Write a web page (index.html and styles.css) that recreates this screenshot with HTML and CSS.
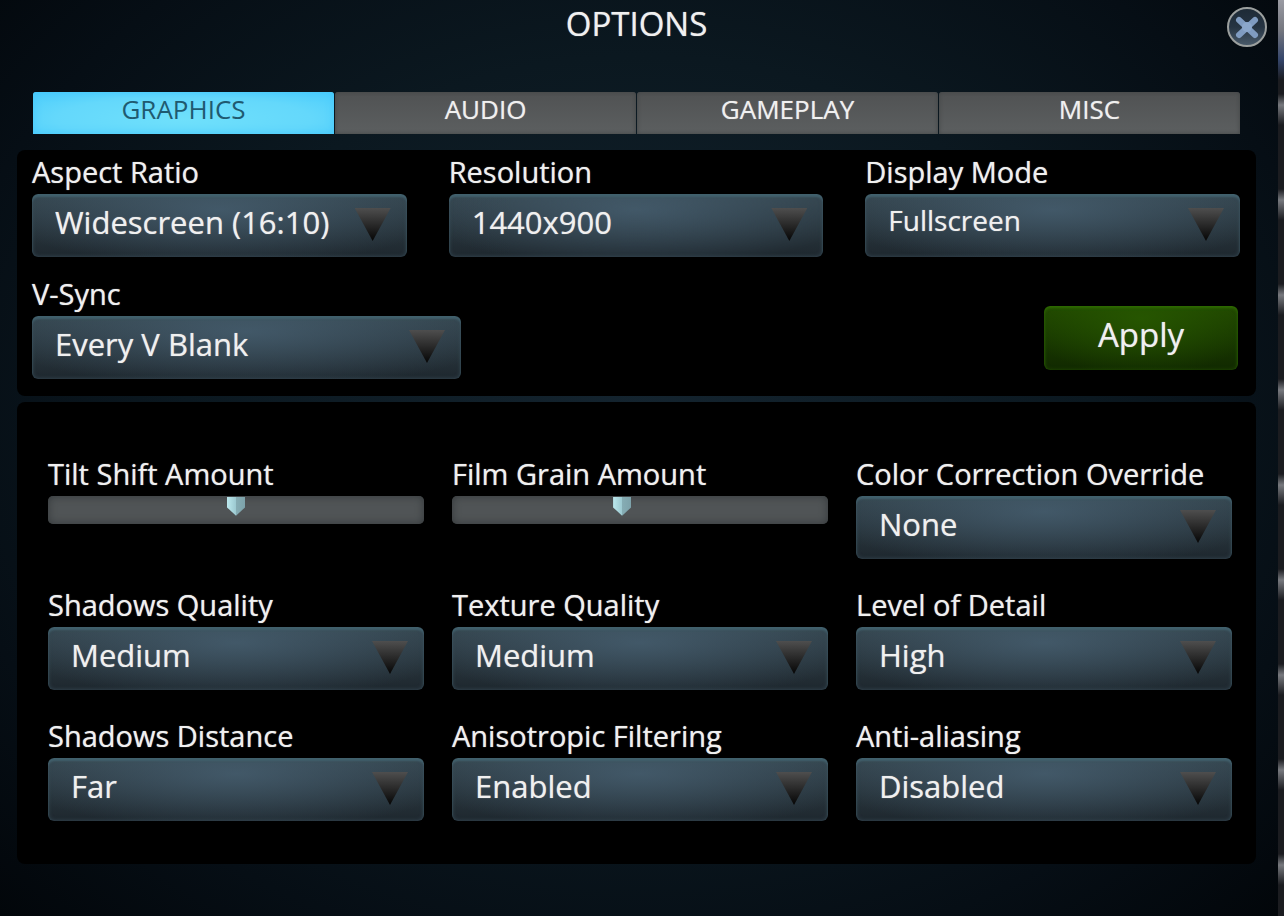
FILE: index.html
```html
<!DOCTYPE html>
<html lang="en">

<head>
	<meta charset="utf-8">
	<title>Options</title>
	<link rel="stylesheet" href="styles.css">
</head>

<body>
	<main class="window">
		<header class="title-bar">
			<h1>OPTIONS</h1>
			<button class="close" aria-label="Close">
				<svg viewBox="0 0 42 42" width="42" height="42">
					<defs>
						<linearGradient id="disc" x1="0" y1="0" x2="0" y2="1">
							<stop offset="0" stop-color="#1d2a36" />
							<stop offset="0.5" stop-color="#263442" />
							<stop offset="1" stop-color="#4a5b6b" />
						</linearGradient>
					</defs>
					<circle cx="21" cy="21" r="19" fill="url(#disc)" stroke="#9b9f9e" stroke-width="2" />
					<path d="M13 14 L29 29 M29 14 L13 29" stroke="#7f9bc0" stroke-width="6" stroke-linecap="round" />
					<circle cx="21" cy="21" r="5" fill="#8ba7cb" />
				</svg>
			</button>
		</header>

		<nav class="tabs">
			<button class="tab active">GRAPHICS</button>
			<button class="tab">AUDIO</button>
			<button class="tab">GAMEPLAY</button>
			<button class="tab">MISC</button>
		</nav>

		<section class="panel display">
			<div class="field">
				<label for="aspect">Aspect Ratio</label>
				<div class="dropdown">
					<select id="aspect"><option>Widescreen (16:10)</option></select>
				</div>
			</div>
			<div class="field">
				<label for="resolution">Resolution</label>
				<div class="dropdown">
					<select id="resolution"><option>1440x900</option></select>
				</div>
			</div>
			<div class="field">
				<label for="mode">Display Mode</label>
				<div class="dropdown">
					<select id="mode" class="small"><option>Fullscreen</option></select>
				</div>
			</div>
			<div class="bottom-row">
				<div class="field vsync">
					<label for="vsync">V-Sync</label>
					<div class="dropdown">
						<select id="vsync"><option>Every V Blank</option></select>
					</div>
				</div>
				<button class="apply">Apply</button>
			</div>
		</section>

		<section class="panel quality">
			<div class="field">
				<label for="tilt">Tilt Shift Amount</label>
				<input type="range" id="tilt" min="0" max="100" value="50">
			</div>
			<div class="field">
				<label for="grain">Film Grain Amount</label>
				<input type="range" id="grain" min="0" max="100" value="45">
			</div>
			<div class="field">
				<label for="color">Color Correction Override</label>
				<div class="dropdown">
					<select id="color"><option>None</option></select>
				</div>
			</div>
			<div class="field">
				<label for="shadows">Shadows Quality</label>
				<div class="dropdown">
					<select id="shadows"><option>Medium</option></select>
				</div>
			</div>
			<div class="field">
				<label for="texture">Texture Quality</label>
				<div class="dropdown">
					<select id="texture"><option>Medium</option></select>
				</div>
			</div>
			<div class="field">
				<label for="lod">Level of Detail</label>
				<div class="dropdown">
					<select id="lod"><option>High</option></select>
				</div>
			</div>
			<div class="field">
				<label for="distance">Shadows Distance</label>
				<div class="dropdown">
					<select id="distance"><option>Far</option></select>
				</div>
			</div>
			<div class="field">
				<label for="filtering">Anisotropic Filtering</label>
				<div class="dropdown">
					<select id="filtering"><option>Enabled</option></select>
				</div>
			</div>
			<div class="field">
				<label for="aa">Anti-aliasing</label>
				<div class="dropdown">
					<select id="aa"><option>Disabled</option></select>
				</div>
			</div>
		</section>
	</main>
</body>

</html>
```

FILE: styles.css
```css
* {
	box-sizing: border-box;
}

body {
	margin: 0;
	padding-right: 6px;
	min-height: 100vh;
	background: linear-gradient(#9a9ba3 0, #75777f 30px, #34456a 60px, transparent 80px), repeating-linear-gradient(#77797e 0, #1b1c20 20px, #1b1c20 84px, #77797e 95px) 0 10px;
	color: #f0f0f0;
	font-family: "Open Sans", sans-serif;
	text-shadow: 0 0 1px #b0b0b0;
}

button,
select {
	font-family: inherit;
	color: inherit;
	text-shadow: inherit;
	border: 0;
}

.window {
	min-height: 100vh;
	padding: 0 22px 0 17px;
	background: radial-gradient(ellipse at 50% 45%, #14242f 0%, #0b1820 50%, #060e15 78%, #02060a 100%);
}

.title-bar {
	position: relative;
	height: 92px;
}

h1 {
	margin: 0;
	font-size: 33px;
	line-height: 48px;
	font-weight: 400;
	text-align: center;
}

.close {
	position: absolute;
	top: 6px;
	right: -12px;
	padding: 0;
	background: none;
	cursor: pointer;
}

.close svg {
	display: block;
}

.tabs {
	display: flex;
	gap: 1px;
	margin: 0 16px 16px;
}

.tab {
	flex: 1;
	height: 42px;
	padding: 0 0 8px;
	font-size: 26px;
	line-height: 34px;
	border-radius: 3px 3px 0 0;
	background: linear-gradient(#505253, #5c5f60);
	box-shadow: inset 0 0 4px #414445;
	cursor: pointer;
}

.tab.active {
	color: #1f5a70;
	text-shadow: none;
	background: radial-gradient(ellipse at 50% 65%, #6fe0fb 0%, #64d8fb 60%, #4accfc 100%);
	box-shadow: inset 0 0 8px #46c8fd;
}

.panel {
	display: grid;
	grid-template-columns: repeat(3, 1fr);
	background: #000000;
	border-radius: 8px;
}

.display {
	column-gap: 42px;
	row-gap: 17px;
	padding: 2px 16px 17px 15px;
	margin-bottom: 6px;
}

.quality {
	column-gap: 28px;
	row-gap: 26px;
	padding: 52px 24px 43px 31px;
}

.field label {
	display: block;
	padding-bottom: 2px;
	font-size: 29px;
	line-height: 40px;
	white-space: nowrap;
}

.dropdown {
	position: relative;
}

.dropdown::after {
	content: "";
	position: absolute;
	top: 14px;
	right: 16px;
	width: 36px;
	height: 33px;
	background: linear-gradient(#4e4e4e, #050505);
	clip-path: polygon(0 0, 100% 0, 50% 100%);
	pointer-events: none;
}

select {
	display: block;
	width: 100%;
	height: 63px;
	padding: 0 56px 8px 23px;
	font-size: 31px;
	appearance: none;
	border-radius: 6px;
	background: radial-gradient(ellipse 60% 90% at 50% 25%, rgba(72, 97, 115, 0.75), transparent), linear-gradient(#35464f, #1e272e);
	box-shadow: inset 0 3px 2px #41606c, inset 0 0 4px #3a4e5a;
}

select.small {
	padding-bottom: 12px;
	font-size: 28px;
}

.bottom-row {
	grid-column: 1 / -1;
	display: flex;
	justify-content: space-between;
	align-items: flex-end;
}

.vsync {
	width: 429px;
}

.apply {
	width: 194px;
	height: 64px;
	margin: 0 2px 9px 0;
	padding: 0 0 8px;
	font-size: 33px;
	border-radius: 6px;
	background: radial-gradient(ellipse 60% 90% at 50% 20%, rgba(40, 90, 0, 0.8), transparent), linear-gradient(#214800, #112900);
	box-shadow: inset 0 2px 3px #2f6c00, inset 0 0 4px #234d00;
	cursor: pointer;
}

input[type="range"] {
	display: block;
	width: 100%;
	height: 28px;
	margin: 0;
	appearance: none;
	border-radius: 5px;
	background: #505456;
	box-shadow: inset 0 0 8px #34383a;
}

input[type="range"]::-webkit-slider-thumb {
	appearance: none;
	width: 18px;
	height: 26px;
	background: linear-gradient(90deg, #bce9ee, #9cc9d0 50%, #86adb4 50%, #7da2aa);
	clip-path: polygon(0 0, 100% 0, 100% 40%, 50% 72%, 0 40%);
}
```
